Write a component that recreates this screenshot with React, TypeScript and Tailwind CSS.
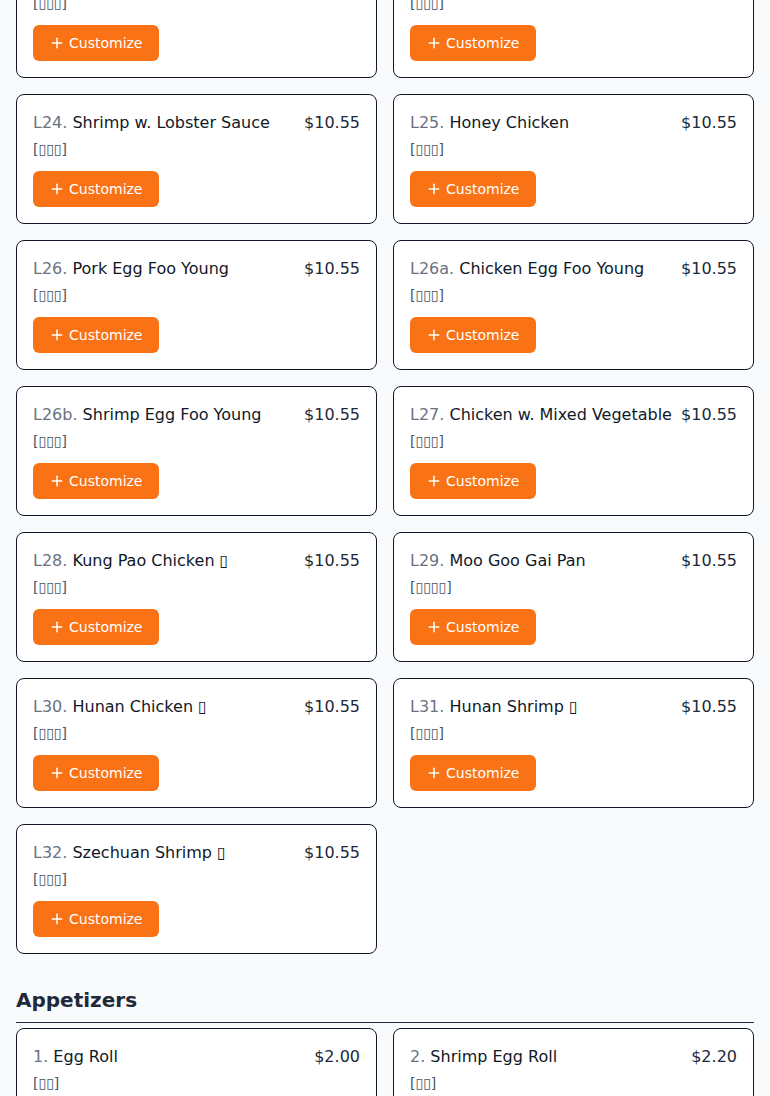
import { Plus } from 'lucide-react';

interface MenuItem {
  code: string;
  name: string;
  zh: string;
  price: string;
  spicy?: boolean;
}

const lunch: MenuItem[] = [
  { code: 'L22.', name: 'Sweet & Sour Chicken', zh: '[▯▯▯]', price: '$10.55' },
  { code: 'L23.', name: 'Sesame Chicken', zh: '[▯▯▯]', price: '$10.55' },
  { code: 'L24.', name: 'Shrimp w. Lobster Sauce', zh: '[▯▯▯]', price: '$10.55' },
  { code: 'L25.', name: 'Honey Chicken', zh: '[▯▯▯]', price: '$10.55' },
  { code: 'L26.', name: 'Pork Egg Foo Young', zh: '[▯▯▯]', price: '$10.55' },
  { code: 'L26a.', name: 'Chicken Egg Foo Young', zh: '[▯▯▯]', price: '$10.55' },
  { code: 'L26b.', name: 'Shrimp Egg Foo Young', zh: '[▯▯▯]', price: '$10.55' },
  { code: 'L27.', name: 'Chicken w. Mixed Vegetable', zh: '[▯▯▯]', price: '$10.55' },
  { code: 'L28.', name: 'Kung Pao Chicken', zh: '[▯▯▯]', price: '$10.55', spicy: true },
  { code: 'L29.', name: 'Moo Goo Gai Pan', zh: '[▯▯▯▯]', price: '$10.55' },
  { code: 'L30.', name: 'Hunan Chicken', zh: '[▯▯▯]', price: '$10.55', spicy: true },
  { code: 'L31.', name: 'Hunan Shrimp', zh: '[▯▯▯]', price: '$10.55', spicy: true },
  { code: 'L32.', name: 'Szechuan Shrimp', zh: '[▯▯▯]', price: '$10.55', spicy: true },
];

const appetizers: MenuItem[] = [
  { code: '1.', name: 'Egg Roll', zh: '[▯▯]', price: '$2.00' },
  { code: '2.', name: 'Shrimp Egg Roll', zh: '[▯▯]', price: '$2.20' },
];

function ItemCard({ item }: { item: MenuItem }) {
  return (
    <div className="bg-white border border-gray-900 rounded-lg p-4">
      <div className="flex items-start justify-between gap-2">
        <div className="text-base leading-6 text-gray-900">
          <span className="text-gray-500">{item.code}</span> {item.name}
          {item.spicy && <span> ▯</span>}
        </div>
        <div className="text-base leading-6 text-gray-800 whitespace-nowrap">{item.price}</div>
      </div>
      <div className="mt-1 text-sm leading-5 text-gray-600">{item.zh}</div>
      <button className="mt-3 flex items-center gap-1 h-9 px-4 bg-[#f97316] text-white text-sm rounded-md">
        <Plus className="w-4 h-4" strokeWidth={2.25} />
        Customize
      </button>
    </div>
  );
}

export default function App() {
  return (
    <div className="min-h-screen bg-gray-50 overflow-hidden" style={{ fontFamily: '"DejaVu Sans", sans-serif' }}>
      <div className="px-4 -mt-[52px]">
        <div className="grid grid-cols-2 gap-4">
          {lunch.map((item) => (
            <ItemCard key={item.code} item={item} />
          ))}
        </div>

        <h2 className="mt-8 pb-2 text-xl leading-7 font-bold text-gray-800 border-b border-gray-800">Appetizers</h2>
        <div className="mt-[5px] grid grid-cols-2 gap-4 pb-8">
          {appetizers.map((item) => (
            <ItemCard key={item.code} item={item} />
          ))}
        </div>
      </div>
    </div>
  );
}
